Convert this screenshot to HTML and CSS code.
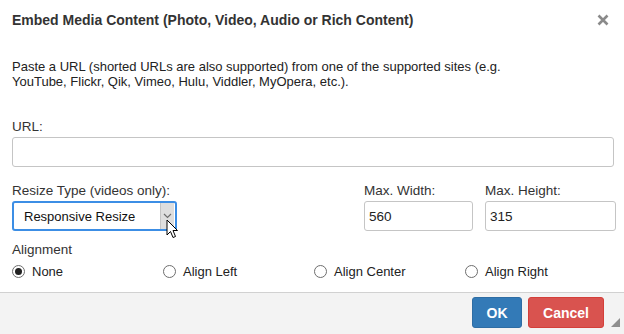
FILE: index.html
```html
<!DOCTYPE html>
<html>
<head>
<meta charset="utf-8">
<link rel="stylesheet" href="styles.css">
</head>
<body>
<div class="dialog">
  <div class="header">
    <div class="title">Embed Media Content (Photo, Video, Audio or Rich Content)</div>
    <div class="close">
      <svg width="12" height="12" viewBox="0 0 12 12"><path d="M1.5 1.5 L10.5 10.5 M10.5 1.5 L1.5 10.5" stroke="#8a8a8a" stroke-width="2.6" stroke-linecap="butt"/></svg>
    </div>
  </div>
  <div class="body">
    <p class="intro">Paste a URL (shorted URLs are also supported) from one of the supported sites (e.g.<br>YouTube, Flickr, Qik, Vimeo, Hulu, Viddler, MyOpera, etc.).</p>
    <div class="field">
      <div class="label">URL:</div>
      <div class="input wide"></div>
    </div>
    <div class="row">
      <div class="field resize">
        <div class="label">Resize Type (videos only):</div>
        <div class="select">
          <span class="select-text">Responsive Resize</span>
          <span class="select-btn">
            <svg width="9" height="6" viewBox="0 0 9 6"><path d="M1 1 L4.5 4.5 L8 1" fill="none" stroke="#6d6d6d" stroke-width="1.2"/></svg>
          </span>
          <svg class="cursor" width="13" height="20" viewBox="0 0 13 20"><path d="M1 1 L1 16 L4.5 12.5 L7 18.5 L9.5 17.5 L7 11.5 L11.5 11.5 Z" fill="#fff" stroke="#000" stroke-width="1" stroke-linejoin="miter"/></svg>
        </div>
      </div>
      <div class="field maxw">
        <div class="label">Max. Width:</div>
        <div class="input small">560</div>
      </div>
      <div class="field maxh">
        <div class="label">Max. Height:</div>
        <div class="input small">315</div>
      </div>
    </div>
    <div class="label align-label">Alignment</div>
    <div class="radios">
      <div class="radio"><span class="dot checked"></span>None</div>
      <div class="radio"><span class="dot"></span>Align Left</div>
      <div class="radio"><span class="dot"></span>Align Center</div>
      <div class="radio"><span class="dot"></span>Align Right</div>
    </div>
  </div>
  <div class="footer">
    <div class="btn ok">OK</div>
    <div class="btn cancel">Cancel</div>
    <svg class="grip" width="9" height="9" viewBox="0 0 9 9"><path d="M9 0 L9 9 L0 9 Z" fill="#8f8f8f"/></svg>
  </div>
</div>
</body>
</html>
```
FILE: styles.css
```css
* { box-sizing: border-box; }
html, body { margin: 0; padding: 0; background: #fff; }
body {
  font-family: "Liberation Sans", Arial, sans-serif;
  color: #333;
  width: 624px;
  height: 334px;
  overflow: hidden;
}
.dialog {
  width: 624px;
  height: 334px;
  display: flex;
  flex-direction: column;
}
.header {
  height: 42px;
  flex-shrink: 0;
  display: flex;
  align-items: center;
  justify-content: space-between;
  padding: 0 12px 2px 12px;
}
.title {
  font-size: 14px;
  font-weight: bold;
  color: #333;
}
.close { width: 12px; height: 12px; display: flex; margin-right: 3px; }
.body {
  flex: 1;
  padding: 17px 8px 0 12px;
}
.intro {
  margin: 0;
  font-size: 13px;
  line-height: 15px;
  color: #222;
}
.label {
  font-size: 13.5px;
  line-height: 15px;
  color: #333;
}
.field { display: flex; flex-direction: column; flex-shrink: 0; }
.field .label { margin-bottom: 3px; }
.body > .field { margin-top: 30px; }
.input {
  border: 1px solid #c5c5c5;
  border-radius: 3px;
  height: 30px;
  font-size: 13.5px;
  padding: 0 4px;
  display: flex;
  align-items: center;
  color: #222;
}
.wide { width: 602px; }
.row {
  display: flex;
  margin-top: 16px;
}
.resize { width: 352px; }
.maxw { width: 121px; }
.maxh { width: 131px; }
.maxw .input { width: 109px; }
.maxh .input { width: 131px; }
.select {
  position: relative;
  width: 165px;
  height: 30px;
  border: 2px solid #3c8ee5;
  border-radius: 3px;
  display: flex;
  align-items: center;
  justify-content: space-between;
  font-size: 13px;
  color: #111;
  padding-left: 10px;
  padding-right: 1px;
}
.select-btn {
  width: 14px;
  height: 26px;
  background: #dedede;
  border-left: 1px solid #c4c4c4;
  display: flex;
  align-items: center;
  justify-content: center;
}
.cursor {
  position: absolute;
  left: 152px;
  top: 16px;
}
.align-label { margin-top: 11px; }
.radios {
  display: flex;
  margin-top: 7px;
}
.radio {
  width: 151px;
  flex-shrink: 0;
  display: flex;
  align-items: center;
  font-size: 13px;
  color: #222;
}
.dot {
  width: 13px;
  height: 13px;
  border: 1px solid #6e6e6e;
  border-radius: 50%;
  margin-right: 7px;
  display: flex;
  align-items: center;
  justify-content: center;
  background: #fff;
}
.dot.checked::after {
  content: "";
  width: 7px;
  height: 7px;
  border-radius: 50%;
  background: #222;
}
.footer {
  height: 42px;
  flex-shrink: 0;
  background: #f3f3f3;
  border-top: 1px solid #d1d1d1;
  display: flex;
  align-items: flex-start;
  justify-content: flex-end;
  padding: 4px 20px 0 0;
  position: relative;
}
.btn {
  height: 31px;
  border-radius: 3px;
  color: #fff;
  font-size: 14px;
  font-weight: bold;
  display: flex;
  align-items: center;
  justify-content: center;
}
.ok { width: 50px; background: #337ab7; border: 1px solid #2e6da4; }
.cancel { width: 76px; margin-left: 6px; background: #d9534f; border: 1px solid #d43f3a; }
.grip {
  position: absolute;
  right: 4px;
  bottom: 7px;
}
```
